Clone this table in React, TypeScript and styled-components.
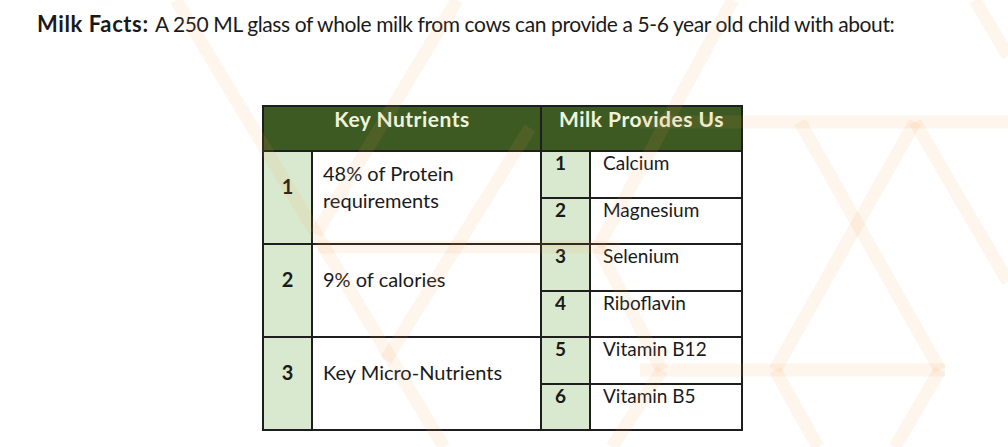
import React from "react";
import styled, { createGlobalStyle } from "styled-components";

const GlobalStyle = createGlobalStyle`
  html, body { margin: 0; padding: 0; background: #ffffff; }
  * { box-sizing: border-box; }
`;

const Page = styled.div`
  position: relative;
  width: 1008px;
  height: 447px;
  overflow: hidden;
  background: #ffffff;
  font-family: Lato, "Open Sans", "Liberation Sans", sans-serif;
  color: #1a1a1a;
  padding: 8px 0 0 37px;
  display: flex;
  flex-direction: column;
`;

const Title = styled.p`
  margin: 0;
  font-size: 21px;
  letter-spacing: -0.4px;
  line-height: 32px;
  font-weight: 400;
  white-space: nowrap;
`;

const Strong = styled.strong`
  font-weight: 700;
  font-size: 22px;
  letter-spacing: 0.6px;
  margin-right: 2px;
`;

const Table = styled.div`
  display: grid;
  grid-template-columns: 47px 227px 47px 150px;
  grid-template-rows: 43px 45px 44px 45px 44px 45px 44px;
  gap: 2px;
  padding: 2px;
  background: #1e1e1e;
  width: max-content;
  margin: 65px 0 0 225px;
`;

const HeadCell = styled.div`
  grid-column: span 2;
  background: #3d5a22;
  color: #eef3dc;
  font-weight: 700;
  font-size: 21px;
  letter-spacing: 0.5px;
  line-height: 22px;
  padding-top: 1px;
  text-align: center;
`;

const MainNum = styled.div`
  grid-row: span 2;
  background: #d9e9cf;
  font-weight: 700;
  font-size: 20px;
  line-height: 27px;
  display: flex;
  align-items: center;
  justify-content: center;
  padding-bottom: 22px;
`;

const MainText = styled.div`
  grid-row: span 2;
  background: #ffffff;
  font-size: 20px;
  line-height: 27px;
  display: flex;
  align-items: center;
  padding: 0 0 22px 10px;
`;

const SubNum = styled.div`
  background: #d9e9cf;
  font-weight: 700;
  font-size: 19px;
  line-height: 22px;
  padding-left: 13px;
`;

const SubText = styled.div`
  background: #ffffff;
  font-size: 19px;
  line-height: 22px;
  padding-left: 12px;
`;

const Pattern = styled.svg`
  position: absolute;
  left: 0;
  top: 0;
  pointer-events: none;
`;

const segments = [
  "M176,0 L444,447",
  "M457,0 L316,234",
  "M530,128 L386,360",
  "M733,0 L598,247",
  "M598,247 L662,370",
  "M662,370 L612,447",
  "M800,122 L940,370",
  "M915,122 L775,370",
  "M915,122 L1008,282",
  "M775,370 L818,447",
  "M940,370 L895,447",
  "M975,0 L1008,56",
  "M640,122 L1008,122",
  "M318,247 L620,247",
  "M640,370 L945,370",
];

const mainRows = [
  { n: "1", lines: ["48% of Protein", "requirements"] },
  { n: "2", lines: ["9% of calories"] },
  { n: "3", lines: ["Key Micro-Nutrients"] },
];

const subRows = [
  ["Calcium", "Magnesium"],
  ["Selenium", "Riboflavin"],
  ["Vitamin B12", "Vitamin B5"],
];

export default function App() {
  return (
    <>
      <GlobalStyle />
      <Page>
        <Title>
          <Strong>Milk Facts:</Strong> A 250 ML glass of whole milk from cows can provide a 5-6 year old child with about:
        </Title>
        <Table>
          <HeadCell>Key Nutrients</HeadCell>
          <HeadCell>Milk Provides Us</HeadCell>
          {mainRows.map((row, i) => (
            <React.Fragment key={row.n}>
              <MainNum>{row.n}</MainNum>
              <MainText>
                <span>
                  {row.lines.map((l, k) => (
                    <React.Fragment key={l}>
                      {k > 0 && <br />}
                      {l}
                    </React.Fragment>
                  ))}
                </span>
              </MainText>
              {subRows[i].map((s, j) => (
                <React.Fragment key={s}>
                  <SubNum>{i * 2 + j + 1}</SubNum>
                  <SubText>{s}</SubText>
                </React.Fragment>
              ))}
            </React.Fragment>
          ))}
        </Table>
        <Pattern width="1008" height="447" viewBox="0 0 1008 447">
          <g
            fill="none"
            stroke="#f39a52"
            strokeOpacity="0.1"
            strokeWidth="13"
            strokeLinecap="butt"
            strokeLinejoin="miter"
          >
            {segments.map((d) => (
              <path key={d} d={d} />
            ))}
          </g>
        </Pattern>
      </Page>
    </>
  );
}
